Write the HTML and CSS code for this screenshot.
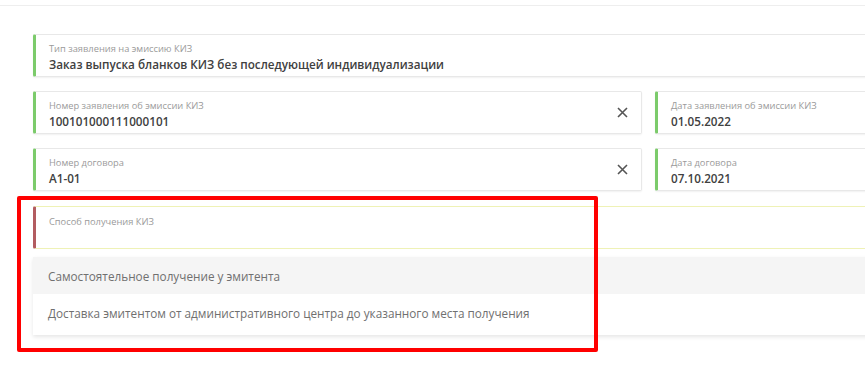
FILE: index.html
```html
<!DOCTYPE html>
<html lang="ru">
<head>
    <meta charset="UTF-8">
    <meta name="viewport" content="width=device-width, initial-scale=1.0">
    <title>Заявление на эмиссию КИЗ</title>
    <link rel="stylesheet" href="styles.css">
</head>
<body>
<div class="page">
    <div class="top-bar"></div>

    <div class="form">
        <div class="field field-wide">
            <div class="field-label">Тип заявления на эмиссию КИЗ</div>
            <div class="field-value">Заказ выпуска бланков КИЗ без последующей индивидуализации</div>
        </div>

        <div class="form-row">
            <div class="field has-clear">
                <div class="field-label">Номер заявления об эмиссии КИЗ</div>
                <div class="field-value">100101000111000101</div>
                <span class="clear-btn">
                    <svg width="11" height="11" viewBox="0 0 11 11"><path d="M1 1L10 10M10 1L1 10" stroke="#555" stroke-width="1.6" fill="none"/></svg>
                </span>
            </div>
            <div class="field">
                <div class="field-label">Дата заявления об эмиссии КИЗ</div>
                <div class="field-value">01.05.2022</div>
            </div>
        </div>

        <div class="form-row">
            <div class="field has-clear">
                <div class="field-label">Номер договора</div>
                <div class="field-value">A1-01</div>
                <span class="clear-btn">
                    <svg width="11" height="11" viewBox="0 0 11 11"><path d="M1 1L10 10M10 1L1 10" stroke="#555" stroke-width="1.6" fill="none"/></svg>
                </span>
            </div>
            <div class="field">
                <div class="field-label">Дата договора</div>
                <div class="field-value">07.10.2021</div>
            </div>
        </div>

        <div class="select">
            <div class="field field-select">
                <div class="field-label">Способ получения КИЗ</div>
            </div>
            <ul class="dropdown">
                <li class="active">Самостоятельное получение у эмитента</li>
                <li>Доставка эмитентом от административного центра до указанного места получения</li>
            </ul>
        </div>
    </div>

    <div class="highlight"></div>
</div>
</body>
</html>
```

FILE: styles.css
```css
body {
    margin: 0;
    font-family: "Open Sans", "Noto Sans", sans-serif;
    background-color: #fff;
    color: #333;
}
.page {
    position: relative;
    height: 378px;
    overflow: hidden;
}
.top-bar {
    height: 5px;
    border-bottom: 1px solid #eeeeee;
}
.form {
    width: 900px;
    padding: 28px 0 0 33px;
    display: flex;
    flex-direction: column;
    gap: 14px;
}
.form-row {
    display: grid;
    grid-template-columns: 609px 1fr;
    column-gap: 13px;
}
.field {
    position: relative;
    height: 43px;
    box-sizing: border-box;
    padding: 8px 40px 0 13px;
    background-color: #fff;
    border: 1px solid #e8e8e8;
    border-left: 3px solid #7ccb6b;
    border-radius: 2px;
    box-shadow: 0 1px 2px rgba(0, 0, 0, 0.06);
}
.field-label {
    font-size: 9.3px;
    line-height: 12px;
    color: #9a9a9a;
}
.field-value {
    font-size: 11.7px;
    line-height: 17px;
    font-weight: 600;
    color: #404040;
    margin-top: 1px;
}
.clear-btn {
    position: absolute;
    right: 13px;
    top: 15px;
    line-height: 0;
}
.select {
    margin-top: 1px;
}
.field-select {
    height: 43px;
    padding-top: 9px;
    border-top-color: #eff2b6;
    border-bottom-color: #eff2b6;
    border-right: none;
    border-left-color: #b35c60;
    box-shadow: none;
}
.dropdown {
    list-style: none;
    margin: 8px 0 0 0;
    padding: 0 0 4px 0;
    background-color: #fff;
    box-shadow: 0 2px 4px rgba(0, 0, 0, 0.1);
}
.dropdown li {
    padding: 11px 15px 10px;
    font-size: 11.75px;
    line-height: 16px;
    color: #707070;
}
.dropdown li.active {
    background-color: #f5f5f5;
}
.highlight {
    position: absolute;
    left: 17px;
    top: 196px;
    width: 573px;
    height: 148px;
    border: 4px solid #ff0000;
    border-radius: 2px;
}
```
